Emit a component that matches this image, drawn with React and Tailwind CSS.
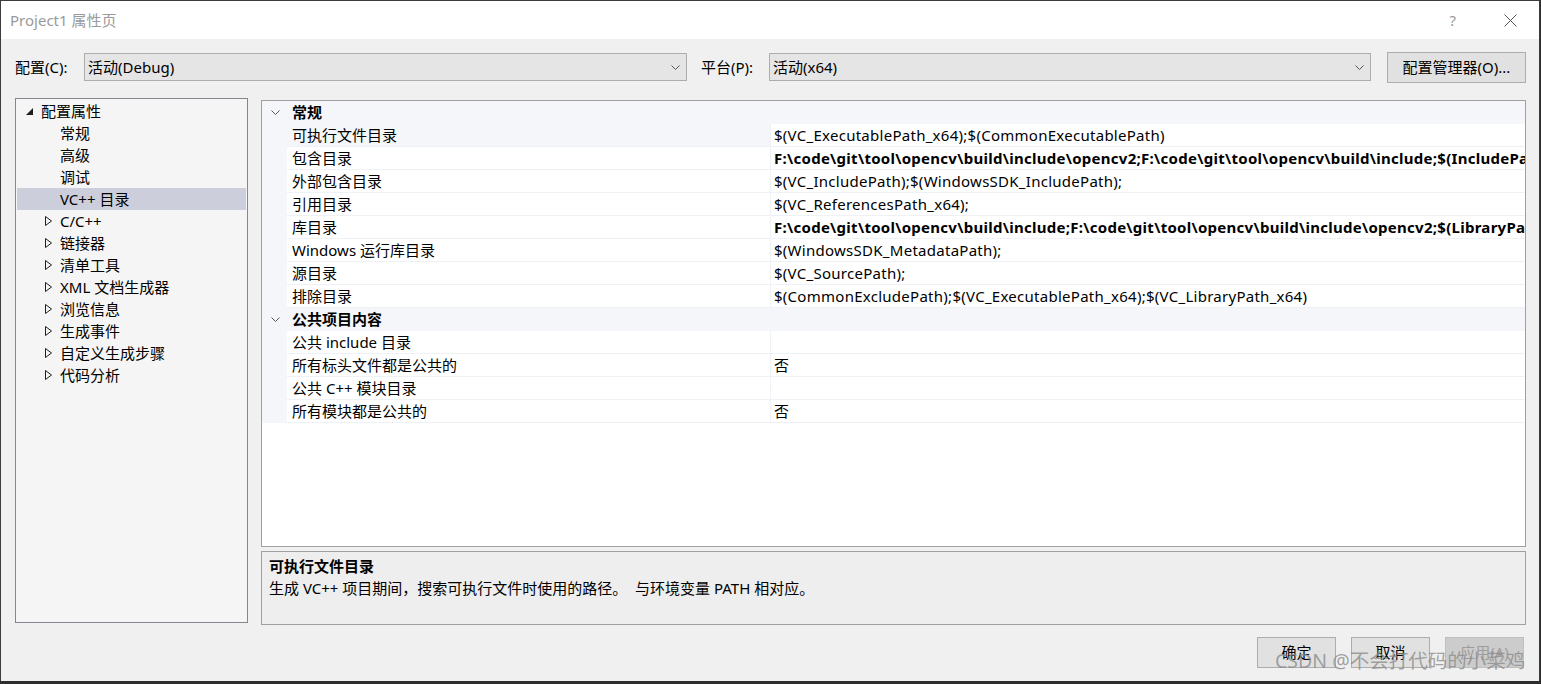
import React from 'react';

const font = { fontFamily: '"Noto Sans", "Noto Sans CJK SC", sans-serif' };

const treeItems = [
  { label: '常规', kind: 'leaf' },
  { label: '高级', kind: 'leaf' },
  { label: '调试', kind: 'leaf' },
  { label: 'VC++ 目录', kind: 'leaf', selected: true },
  { label: 'C/C++', kind: 'closed' },
  { label: '链接器', kind: 'closed' },
  { label: '清单工具', kind: 'closed' },
  { label: 'XML 文档生成器', kind: 'closed' },
  { label: '浏览信息', kind: 'closed' },
  { label: '生成事件', kind: 'closed' },
  { label: '自定义生成步骤', kind: 'closed' },
  { label: '代码分析', kind: 'closed' },
];

const groups = [
  {
    title: '常规',
    rows: [
      { name: '可执行文件目录', value: '$(VC_ExecutablePath_x64);$(CommonExecutablePath)', selected: true },
      { name: '包含目录', value: 'F:\\code\\git\\tool\\opencv\\build\\include\\opencv2;F:\\code\\git\\tool\\opencv\\build\\include;$(IncludePath)', bold: true },
      { name: '外部包含目录', value: '$(VC_IncludePath);$(WindowsSDK_IncludePath);' },
      { name: '引用目录', value: '$(VC_ReferencesPath_x64);' },
      { name: '库目录', value: 'F:\\code\\git\\tool\\opencv\\build\\include;F:\\code\\git\\tool\\opencv\\build\\include\\opencv2;$(LibraryPath_x64)', bold: true },
      { name: 'Windows 运行库目录', value: '$(WindowsSDK_MetadataPath);' },
      { name: '源目录', value: '$(VC_SourcePath);' },
      { name: '排除目录', value: '$(CommonExcludePath);$(VC_ExecutablePath_x64);$(VC_LibraryPath_x64)' },
    ],
  },
  {
    title: '公共项目内容',
    rows: [
      { name: '公共 include 目录', value: '' },
      { name: '所有标头文件都是公共的', value: '否' },
      { name: '公共 C++ 模块目录', value: '' },
      { name: '所有模块都是公共的', value: '否' },
    ],
  },
];

function Chevron({ className }) {
  return (
    <svg width="9" height="5" viewBox="0 0 9 5" className={className}>
      <polyline points="0.5,0.5 4.5,4.5 8.5,0.5" fill="none" stroke="#555" strokeWidth="1" />
    </svg>
  );
}

function Select({ value, width }) {
  return (
    <div className={`${width} h-[28px] bg-[#e5e5e5] border border-[#adadad] flex items-center justify-between pl-[3px] pr-[6px]`}>
      <span className="text-[15px] leading-none text-black">{value}</span>
      <Chevron />
    </div>
  );
}

function Button({ children, disabled }) {
  return (
    <div
      className={`w-[79px] h-[31px] flex items-center justify-center border text-[15px] ${
        disabled ? 'bg-[#cccccc] border-[#bfbfbf] text-[#9d9d9d]' : 'bg-[#e1e1e1] border-[#adadad] text-black'
      }`}
    >
      {children}
    </div>
  );
}

export default function App() {
  return (
    <div style={font} className="relative w-[1541px] h-[684px] bg-[#2e2e2e] overflow-hidden">
      <div className="w-[1540px] h-[681px] border-l border-r border-t border-[#3c3c3c] bg-[#f0f0f0] flex flex-col">
        {/* Title bar */}
        <div className="h-[38px] bg-white flex items-center justify-between pl-[9px]">
          <span className="text-[15px] text-[#9a9a9a]">Project1 属性页</span>
          <div className="flex items-center h-full">
            <span className="text-[15px] text-[#9a9a9a] mr-[48px]">?</span>
            <svg width="13" height="13" viewBox="0 0 13 13" className="mr-[22px]">
              <path d="M0.5 0.5 L12.5 12.5 M12.5 0.5 L0.5 12.5" stroke="#555" strokeWidth="1" />
            </svg>
          </div>
        </div>

        {/* Configuration row */}
        <div className="flex items-center h-[30px] mt-[13px] pl-[14px]">
          <span className="text-[15px] w-[69px]">配置(C):</span>
          <Select value="活动(Debug)" width="w-[603px]" />
          <span className="text-[15px] ml-[14px] w-[68px]">平台(P):</span>
          <Select value="活动(x64)" width="w-[602px]" />
          <div className="ml-[16px] w-[139px] h-[31px] bg-[#e1e1e1] border border-[#adadad] flex items-center justify-center text-[15px]">
            配置管理器(O)...
          </div>
        </div>

        {/* Main area */}
        <div className="flex mt-[16px] pl-[14px]">
          {/* Tree */}
          <div className="w-[233px] h-[525px] border border-[#828790] bg-[#f5f5f5] p-[1px]">
            <div className="h-[22px] flex items-center">
              <svg width="7" height="7" viewBox="0 0 7 7" className="ml-[9px] mr-[8px]">
                <polygon points="7,0 7,7 0,7" fill="#1e1e1e" />
              </svg>
              <span className="text-[15px] leading-none">配置属性</span>
            </div>
            {treeItems.map((item) => (
              <div
                key={item.label}
                className={`h-[22px] flex items-center ${item.selected ? 'bg-[#cccedb]' : ''}`}
              >
                <div className="w-[43px] flex justify-end pr-[8px]">
                  {item.kind === 'closed' && (
                    <svg width="7" height="10" viewBox="0 0 7 10">
                      <polygon points="0.5,0.5 6.5,5 0.5,9.5" fill="none" stroke="#1e1e1e" strokeWidth="1" />
                    </svg>
                  )}
                </div>
                <span className="text-[15px] leading-none">{item.label}</span>
              </div>
            ))}
          </div>

          {/* Right column */}
          <div className="ml-[13px] w-[1265px] flex flex-col">
            <div className="mt-[2px] h-[447px] border border-[#a0a0a0] bg-white overflow-hidden">
              {groups.map((g) => (
                <div key={g.title}>
                  <div className="h-[23px] bg-[#f4f6fa] flex items-center">
                    <div className="w-[25px] flex justify-center pl-[2px]">
                      <Chevron />
                    </div>
                    <span className="text-[15px] leading-none font-bold pl-[5px]">{g.title}</span>
                  </div>
                  {g.rows.map((r) => (
                    <div key={r.name} className="h-[23px] flex bg-[#f4f6fa]">
                      <div className="w-[25px] shrink-0" />
                      <div
                        className={`w-[483px] shrink-0 flex items-center pl-[5px] border-b border-[#eef1f6] ${
                          r.selected ? 'bg-[#f4f6fa]' : 'bg-white'
                        }`}
                      >
                        <span className="text-[15px] leading-none whitespace-nowrap">{r.name}</span>
                      </div>
                      <div className="flex-1 min-w-0 flex items-center pl-[3px] bg-white border-l border-b border-[#eef1f6] overflow-hidden">
                        <span
                          className={`text-[15px] leading-none whitespace-nowrap tracking-[0.27px] ${r.bold ? 'font-bold' : ''}`}
                        >
                          {r.value}
                        </span>
                      </div>
                    </div>
                  ))}
                </div>
              ))}
            </div>

            <div className="mt-[4px] h-[74px] border border-[#a0a0a0] bg-[#eeeeee] px-[7px] pt-[3px]">
              <div className="text-[15px] font-bold leading-[22px]">可执行文件目录</div>
              <div className="text-[15px] leading-[22px] whitespace-pre">
                生成 VC++ 项目期间，搜索可执行文件时使用的路径。  与环境变量 PATH 相对应。
              </div>
            </div>
          </div>
        </div>

        {/* Buttons */}
        <div className="flex justify-end gap-[15px] mt-[12px] pr-[15px]">
          <Button>确定</Button>
          <Button>取消</Button>
          <Button disabled>应用(A)</Button>
        </div>
      </div>

      {/* Watermark */}
      <div className="absolute left-[1275px] top-[651px] text-[19.5px] leading-none text-[#8c8c8c]/80 whitespace-nowrap">
        CSDN @不会打代码的小菜鸡
      </div>
    </div>
  );
}
